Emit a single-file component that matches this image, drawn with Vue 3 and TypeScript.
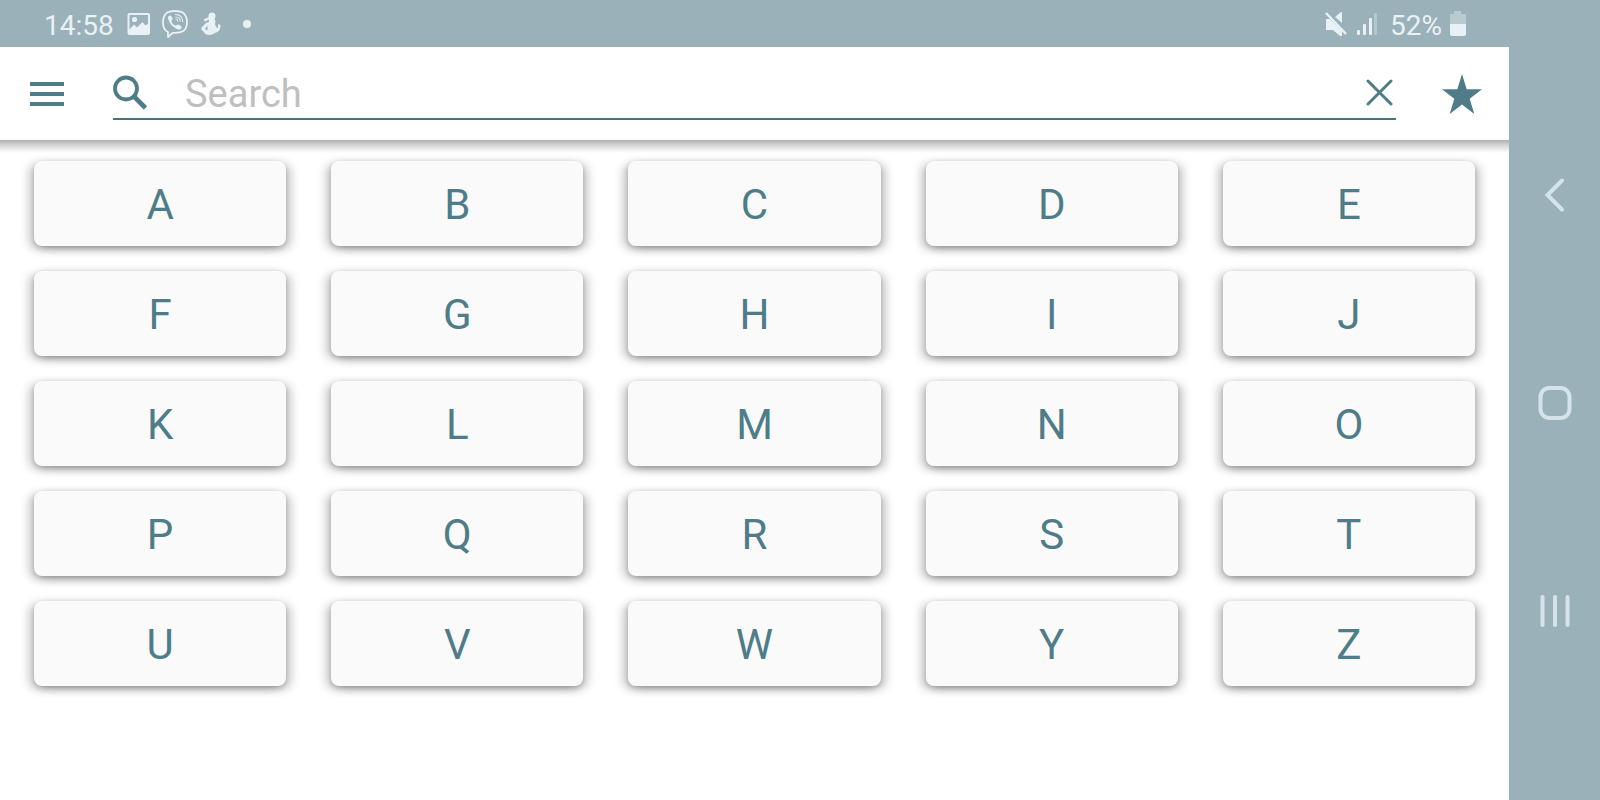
<script setup lang="ts">
import { ref } from 'vue'

const query = ref<string>('')
const letters: string[] = [...'ABCDEFGHIJKLMNOPQRSTUVWYZ']
</script>

<template>
  <div class="screen">
    <div class="main">
      <div class="status">
        <span class="clock">14:58</span>
        <svg class="picture" width="24" height="24" viewBox="0 0 24 24" aria-hidden="true">
          <path fill="currentColor" fill-rule="evenodd" d="M2.500 1h18.500q2 0 2 2v18q0 2-2 2H2.500q-2 0-2-2V3q0-2 2-2zM2.500 3v14.500L7 12.500l3 3L15.500 10l3 3.500 2.500-2V3z" />
          <circle fill="currentColor" cx="7.500" cy="7.500" r="2.600" />
        </svg>
        <svg class="phone" width="28" height="30" viewBox="0 0 28 30" fill="none" stroke="currentColor" aria-hidden="true">
          <path stroke-width="1.800" stroke-linejoin="round" d="M14 2C6 2 2 5 2 13.500c0 5 1.500 8 5 9.500v5l4.500-4.200c9.500.8 14.500-2.300 14.500-10.300C26 5 22 2 14 2z" />
          <path fill="currentColor" stroke="none" d="M8.500 6.500c1.200-.8 3.500 2.500 3.300 3.600-.2 1-1.500 1.100-1.300 2.200.5 2.100 2 3.700 4.200 4.300 1 .2 1.300-1.300 2.500-1.200 1.200.2 3.800 2 3.500 3.100-.5 1.500-2 2.500-3.300 2.100C12 18.500 8.500 14.500 7 9.500c-.3-1.200.5-2.500 1.500-3z" />
          <path stroke-width="1.100" stroke-linecap="round" d="M14.500 5.500c4.500.2 7 2.800 7.200 7M14.800 8c2.800.2 4.300 1.800 4.400 4.200M15 10.300c1.200.1 1.800.7 1.900 1.900" />
        </svg>
        <svg class="figure" width="20" height="24" viewBox="0 0 20 24" fill="currentColor" aria-hidden="true">
          <circle cx="11" cy="4" r="3.500" />
          <path d="M2.500 7.500L8 5l1 2-5 2.500z" />
          <path fill-rule="evenodd" d="M8 7q3-1.500 5.500 0 1.500 2 .5 5l2 4.500q1.500-1.500 1-4.500l2.500 1q.5 6-5.500 8-5 3.500-9.500 1L1 18q-1.500-1.500 0-3l4-4 3-1zM6.500 13.500L4 17l2.500 1.500z" />
        </svg>
        <span class="dot"></span>
        <span class="spacer"></span>
        <svg class="muted" width="24" height="26" viewBox="0 0 24 26" fill="currentColor" aria-hidden="true">
          <path d="M2 8h4l12 12v5h-2l-7-6H2zM11 6l6-5h1v11z" />
          <path fill="none" stroke="currentColor" stroke-width="2.500" d="M2 2l20 21" />
        </svg>
        <svg class="signal" width="22" height="24" viewBox="0 0 22 24" fill="currentColor" aria-hidden="true">
          <rect x="1" y="18" width="3" height="5" rx="1" />
          <rect x="7" y="12" width="3" height="11" rx="1" />
          <rect x="13" y="6" width="3" height="17" rx="1" />
          <rect x="18" y="1" width="3" height="22" rx="1" opacity=".35" />
        </svg>
        <span class="charge">52%</span>
        <svg class="battery" width="16" height="25" viewBox="0 0 16 25" fill="currentColor" aria-hidden="true">
          <path opacity=".4" d="M4 0h7v3h4q1 0 1 2v8H0V5q0-2 1-2h3z" />
          <path d="M0 13h16v10q0 2-2 2H2q-2 0-2-2z" />
        </svg>
      </div>

      <header class="toolbar">
        <button class="icon menu" type="button" aria-label="Menu">
          <svg width="34" height="24" viewBox="0 0 34 24" fill="currentColor">
            <path d="M0 0h34v4H0zM0 10h34v4H0zM0 20h34v4H0z" />
          </svg>
        </button>
        <div class="field">
          <svg width="35" height="36" viewBox="0 0 35 36" fill="none" stroke="currentColor" aria-hidden="true">
            <circle cx="13" cy="13.500" r="11" stroke-width="3.800" />
            <path stroke-width="4.600" d="M20.500 21l12 12" />
            <path stroke-width="3" d="M19.500 23l4-4" />
          </svg>
          <input v-model="query" type="text" placeholder="Search" aria-label="Search" />
          <button class="icon" type="button" aria-label="Clear" @click="query = ''">
            <svg width="27" height="27" viewBox="0 0 27 27" fill="none" stroke="currentColor" stroke-width="3" stroke-linecap="round">
              <path d="M2 2l23 23M25 2L2 25" />
            </svg>
          </button>
        </div>
        <button class="icon star" type="button" aria-label="Favourites">
          <svg width="40" height="40" viewBox="0 0 40 40" fill="currentColor">
            <path d="M20 0l4.700 15.300H40l-12.300 9.400L32.300 40 20 30.500 7.700 40l4.600-15.300L0 15.300h15.300z" />
          </svg>
        </button>
      </header>

      <main class="letters">
        <button v-for="letter in letters" :key="letter" class="letter" type="button">{{ letter }}</button>
      </main>
    </div>

    <nav class="system">
      <button type="button" aria-label="Back">
        <svg width="34" height="36" viewBox="0 0 34 36" fill="none" stroke="currentColor" stroke-width="4" stroke-linecap="round">
          <path d="M24 3.500L9.500 18 24 32.500" />
        </svg>
      </button>
      <button type="button" aria-label="Home">
        <svg width="34" height="36" viewBox="0 0 34 36" fill="none" stroke="currentColor" stroke-width="4">
          <rect x="2.500" y="3" width="29" height="30" rx="9" />
        </svg>
      </button>
      <button type="button" aria-label="Recent apps">
        <svg width="34" height="36" viewBox="0 0 34 36" fill="none" stroke="currentColor" stroke-width="4" stroke-linecap="round">
          <path d="M4.500 4v28M17 4v28M29.500 4v28" />
        </svg>
      </button>
    </nav>
  </div>
</template>

<style>
body {
  margin: 0;
  background: #fff;
}
</style>

<style scoped>
.screen {
  display: flex;
  min-height: 100vh;
  font-family: Roboto, "Liberation Sans", sans-serif;
  color: #4e7d89;
}

.main {
  flex: 1;
  min-width: 0;
  background: #fff;
}

.status {
  display: flex;
  align-items: center;
  box-sizing: border-box;
  height: 47px;
  padding: 1px 43px 0 44px;
  background: #9ab1b9;
  border-bottom: 1px solid #a3adb1;
  color: #e8f1f5;
  font-size: 28px;
  line-height: 44px;
}

.clock,
.charge {
  padding-top: 4px;
}

.picture {
  margin-left: 13px;
}

.phone {
  margin-left: 10px;
}

.figure {
  margin-left: 12px;
}

.dot {
  width: 8px;
  height: 8px;
  margin-left: 22px;
  border-radius: 50%;
  background: currentColor;
}

.spacer {
  flex: 1;
}

.signal {
  margin: 0 12px 0 8px;
}

.battery {
  margin-left: 8px;
}

button {
  padding: 0;
  border: 0;
  background: none;
  color: inherit;
  font: inherit;
  cursor: pointer;
}

svg {
  display: block;
  flex: none;
}

.toolbar {
  position: relative;
  display: flex;
  align-items: center;
  box-sizing: border-box;
  height: 93px;
  padding: 0 27px 0 30px;
  background: #fff;
}

.toolbar::after {
  content: "";
  position: absolute;
  top: 100%;
  left: 0;
  right: 0;
  height: 13px;
  background: linear-gradient(#b0b0b0, #d5d5d5 40%, #fff);
}

.field {
  display: flex;
  flex: 1;
  align-items: center;
  box-sizing: border-box;
  height: 53px;
  margin: 0 46px 0 49px;
  padding-right: 3px;
  border-bottom: 2px solid #457579;
}

.field input {
  flex: 1;
  min-width: 0;
  padding: 2px 0 0;
  margin-left: 37px;
  border: 0;
  outline: 0;
  background: none;
  color: #4e7d89;
  font: inherit;
  font-size: 38px;
}

.field input::placeholder {
  color: #bfbfbf;
  opacity: 1;
}

.letters {
  display: grid;
  grid-template-columns: repeat(5, 1fr);
  gap: 25px 45px;
  padding: 21px 34px 34px;
}

.letter {
  height: 85px;
  padding-top: 2px;
  border-radius: 8px;
  background: #fafafa;
  box-shadow:
    0 2px 4px rgba(0, 0, 0, 0.12),
    -5px 3px 10px rgba(0, 0, 0, 0.22),
    5px 3px 10px rgba(0, 0, 0, 0.22);
  font-size: 42px;
}

.system {
  display: flex;
  flex-direction: column;
  align-items: stretch;
  justify-content: center;
  box-sizing: border-box;
  width: 91px;
  padding-top: 6px;
  background: #9ab1b9;
  color: #d5e3ea;
}

.system button {
  display: flex;
  align-items: center;
  justify-content: center;
  height: 208px;
}
</style>
